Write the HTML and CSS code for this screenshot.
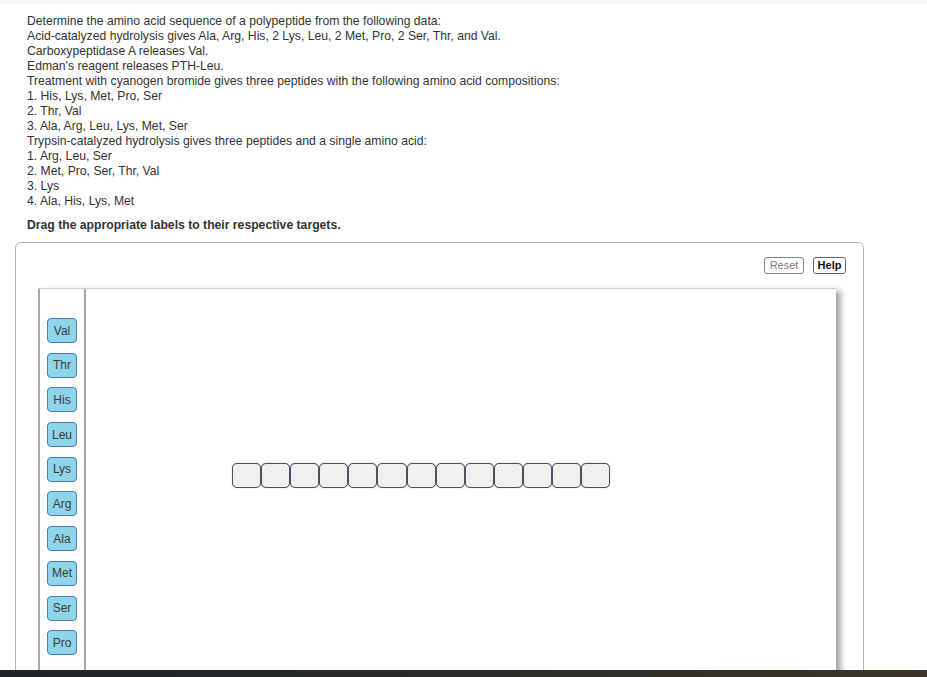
FILE: index.html
```html
<!DOCTYPE html>
<html lang="en">
<head>
<meta charset="utf-8">
<title>Amino acid sequence</title>
<link rel="stylesheet" href="styles.css">
</head>
<body>
<div class="topstrip"></div>
<div class="question">
  <div class="lines">
    <div>Determine the amino acid sequence of a polypeptide from the following data:</div>
    <div>Acid-catalyzed hydrolysis gives Ala, Arg, His, 2 Lys, Leu, 2 Met, Pro, 2 Ser, Thr, and Val.</div>
    <div>Carboxypeptidase A releases Val.</div>
    <div>Edman's reagent releases PTH-Leu.</div>
    <div>Treatment with cyanogen bromide gives three peptides with the following amino acid compositions:</div>
    <div>1. His, Lys, Met, Pro, Ser</div>
    <div>2. Thr, Val</div>
    <div>3. Ala, Arg, Leu, Lys, Met, Ser</div>
    <div>Trypsin-catalyzed hydrolysis gives three peptides and a single amino acid:</div>
    <div>1. Arg, Leu, Ser</div>
    <div>2. Met, Pro, Ser, Thr, Val</div>
    <div>3. Lys</div>
    <div>4. Ala, His, Lys, Met</div>
  </div>
  <p class="instr">Drag the appropriate labels to their respective targets.</p>
</div>
<div class="panel">
  <div class="toolbar">
    <button class="btn reset">Reset</button>
    <button class="btn help">Help</button>
  </div>
  <div class="frame">
    <div class="labels">
      <div class="label">Val</div>
      <div class="label">Thr</div>
      <div class="label">His</div>
      <div class="label">Leu</div>
      <div class="label">Lys</div>
      <div class="label">Arg</div>
      <div class="label">Ala</div>
      <div class="label">Met</div>
      <div class="label">Ser</div>
      <div class="label">Pro</div>
    </div>
    <div class="canvas">
      <div class="targets">
        <div class="target"></div><div class="target"></div><div class="target"></div><div class="target"></div><div class="target"></div><div class="target"></div><div class="target"></div><div class="target"></div><div class="target"></div><div class="target"></div><div class="target"></div><div class="target"></div><div class="target"></div>
      </div>
    </div>
  </div>
</div>
<div class="bottombar"></div>
</body>
</html>
```
FILE: styles.css
```css
html, body {
  margin: 0;
  padding: 0;
  overflow: hidden;
  height: 100%;
}
body {
  background: #fff;
  font-family: "Liberation Sans", Arial, sans-serif;
  font-size: 12px;
  color: #333;
}
.topstrip {
  height: 4px;
  background: #f6f6f6;
}
.question {
  padding: 10px 0 0 27px;
  font-size: 12.2px;
}
.lines div {
  line-height: 15px;
  height: 15px;
  white-space: nowrap;
}
.instr {
  margin: 9px 0 0 0;
  line-height: 15px;
  font-weight: bold;
}
.panel {
  margin: 9px 0 0 15px;
  width: 849px;
  height: 600px;
  box-sizing: border-box;
  border: 1px solid #b4b4b4;
  border-radius: 6px;
  padding: 14px 17px 0 22px;
}
.toolbar {
  display: flex;
  justify-content: flex-end;
  gap: 9px;
  height: 17px;
}
.btn {
  font-family: "Liberation Sans", Arial, sans-serif;
  font-size: 11px;
  height: 17px;
  line-height: 15px;
  padding: 0 3px;
  margin: 0;
  background: #fff;
  border-radius: 3px;
  box-sizing: border-box;
}
.reset {
  width: 40px;
  color: #7a7a7a;
  border: 1px solid #6f8c8c;
}
.help {
  width: 33px;
  color: #111;
  font-weight: bold;
  border: 1px solid #666;
}
.frame {
  margin-top: 14px;
  width: 798px;
  height: 420px;
  box-sizing: border-box;
  border-top: 1px solid #cfcfcf;
  display: flex;
  box-shadow: 5px 3px 6px rgba(0, 0, 0, 0.35);
  background: #fff;
}
.labels {
  width: 48px;
  box-sizing: border-box;
  border-left: 2px solid #a8a8a8;
  border-right: 2px solid #a8a8a8;
  padding: 29px 0 0 7px;
  display: flex;
  flex-direction: column;
  gap: 9.7px;
}
.label {
  width: 30px;
  height: 25px;
  box-sizing: border-box;
  background: #8fd5ea;
  border: 1px solid #4a79c6;
  border-radius: 4px;
  display: flex;
  align-items: center;
  justify-content: center;
  color: #3a3a3a;
  font-size: 12px;
}
.canvas {
  flex: 1;
  padding: 174px 0 0 146px;
}
.targets {
  display: flex;
}
.target {
  width: 29.1px;
  height: 25px;
  flex: none;
  box-sizing: border-box;
  border: 1px solid #4e4e60;
  box-shadow: 0 0 1px #8a8a98;
  border-radius: 5px;
  background: #eff0f0;
}
.bottombar {
  position: fixed;
  left: 0;
  right: 0;
  bottom: 0;
  height: 7px;
  background: linear-gradient(to right, #1e2327, #2a2b2a 50%, #3a3526);
}
```
